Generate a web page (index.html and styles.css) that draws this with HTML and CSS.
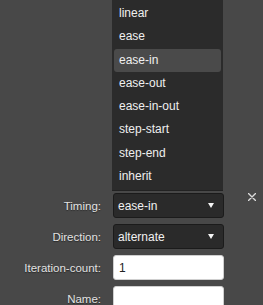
FILE: index.html
```html
<!DOCTYPE html>
<html lang="en">
<head>
    <meta charset="UTF-8">
    <meta name="viewport" content="width=device-width, initial-scale=1.0">
    <title>Animation settings</title>
    <link rel="stylesheet" href="styles.css">
</head>
<body>
    <div class="panel">
        <form class="anim-form">
            <label class="field-label">Timing:</label>
            <div class="select-box">
                <span>ease-in</span>
                <span class="caret"></span>
            </div>

            <label class="field-label">Direction:</label>
            <div class="select-box">
                <span>alternate</span>
                <span class="caret"></span>
            </div>

            <label class="field-label" for="iterCount">Iteration-count:</label>
            <input type="text" class="text-input" id="iterCount" value="1">

            <label class="field-label" for="animName">Name:</label>
            <input type="text" class="text-input" id="animName">
        </form>

        <button type="button" class="close-btn" aria-label="Close">
            <svg width="8" height="8" viewBox="0 0 8 8">
                <path d="M0.5 0.5 L7.5 7.5 M7.5 0.5 L0.5 7.5" stroke="#dcdcdc" stroke-width="1.4" stroke-linecap="round"/>
            </svg>
        </button>

        <ul class="dropdown-list">
            <li>linear</li>
            <li>ease</li>
            <li class="active">ease-in</li>
            <li>ease-out</li>
            <li>ease-in-out</li>
            <li>step-start</li>
            <li>step-end</li>
            <li>inherit</li>
        </ul>
    </div>
</body>
</html>
```

FILE: styles.css
```css
* {
    margin: 0;
    padding: 0;
    box-sizing: border-box;
}

body {
    font-family: 'Liberation Sans', Arial, sans-serif;
    background: #484848;
    min-height: 100vh;
    overflow: hidden;
}

.panel {
    position: relative;
    padding-top: 193px;
    min-height: 305px;
}

.anim-form {
    display: grid;
    grid-template-columns: 101px 111px;
    column-gap: 12px;
    row-gap: 6px;
    grid-auto-rows: 25px;
    align-items: center;
}

.field-label {
    text-align: right;
    color: #e2e2e2;
    font-size: 11.5px;
    text-shadow: 0 1px 1px rgba(0, 0, 0, 0.45);
}

.select-box {
    height: 25px;
    display: flex;
    align-items: center;
    justify-content: space-between;
    padding: 0 9px 0 4px;
    background: #2a2a2a;
    border: 1px solid #1b1b1b;
    border-radius: 3px;
    color: #f0f0f0;
    font-size: 12px;
}

.caret {
    width: 0;
    height: 0;
    border-left: 3px solid transparent;
    border-right: 3px solid transparent;
    border-top: 5px solid #f4f4f4;
}

.text-input {
    height: 25px;
    width: 100%;
    padding: 0 5px;
    background: #fff;
    border: 1px solid #cfcfcf;
    border-radius: 3px;
    font-family: inherit;
    font-size: 12px;
    color: #222;
}

.close-btn {
    position: absolute;
    top: 193px;
    left: 248px;
    width: 8px;
    height: 8px;
    background: none;
    border: none;
    display: flex;
    cursor: pointer;
}

.dropdown-list {
    position: absolute;
    top: 0;
    left: 112px;
    width: 111px;
    padding: 2px;
    list-style: none;
    background: #2b2b2b;
    border-bottom: 1px solid #222;
}

.dropdown-list li {
    height: 23.3px;
    line-height: 23.3px;
    padding-left: 5px;
    border-radius: 3px;
    color: #efefef;
    font-size: 12px;
}

.dropdown-list li.active {
    background: #4a4a4a;
}
```
